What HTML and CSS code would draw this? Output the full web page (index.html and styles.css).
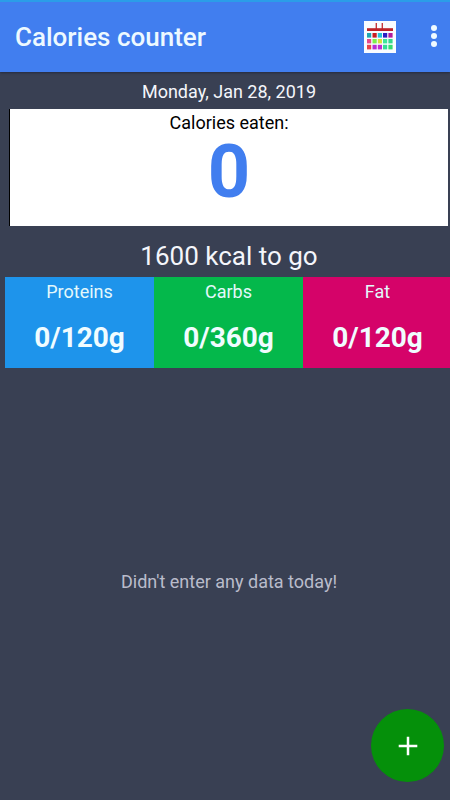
FILE: index.html
```html
<!DOCTYPE html>
<html lang="en">
<head>
<meta charset="utf-8">
<meta name="viewport" content="width=device-width, initial-scale=1">
<title>Calories counter</title>
<link rel="stylesheet" href="styles.css">
</head>
<body>
<header class="app-bar">
  <h1 class="title">Calories counter</h1>
  <button class="bar-button" type="button" aria-label="Calendar">
    <svg width="32" height="32" viewBox="0 0 32 32" aria-hidden="true">
      <rect width="32" height="32" fill="#f9fcff"/>
      <path d="M12.300 2v6M18.300 2v6" stroke="#c4393f" stroke-width="1.4"/>
      <rect x="3" y="7.200" width="26" height="2.800" fill="#bd2229"/>
      <g>
        <rect x="3" y="12" width="4.200" height="4.600" fill="#20a6b2"/>
        <rect x="8.500" y="12" width="4.200" height="4.600" fill="#c91c22"/>
        <rect x="13.800" y="12" width="4.200" height="4.600" fill="#25c4d8"/>
        <rect x="19" y="12" width="4.200" height="4.600" fill="#2b20c4"/>
        <rect x="24.400" y="12" width="4.200" height="4.600" fill="#b21b9c"/>
        <rect x="3" y="18" width="4.200" height="4.400" fill="#e8478c"/>
        <rect x="8.500" y="18" width="4.200" height="4.400" fill="#7bf04a"/>
        <rect x="13.800" y="18" width="4.200" height="4.400" fill="#d8df3c"/>
        <rect x="19" y="18" width="4.200" height="4.400" fill="#3ee69c"/>
        <rect x="24.400" y="18" width="4.200" height="4.400" fill="#32d88c"/>
        <rect x="3" y="23.800" width="4.200" height="4.600" fill="#e8434b"/>
        <rect x="8.500" y="23.800" width="4.200" height="4.600" fill="#b82bd6"/>
        <rect x="13.800" y="23.800" width="4.200" height="4.600" fill="#c32bd0"/>
        <rect x="19" y="23.800" width="4.200" height="4.600" fill="#35dc9a"/>
        <rect x="24.400" y="23.800" width="4.200" height="4.600" fill="#36dc70"/>
      </g>
    </svg>
  </button>
  <button class="bar-button menu-button" type="button" aria-label="More options">
    <svg width="8" height="24" viewBox="0 0 8 24" fill="#f0fbff" aria-hidden="true">
      <circle cx="4" cy="3" r="3"/>
      <circle cx="4" cy="11" r="3"/>
      <circle cx="4" cy="19" r="3"/>
    </svg>
  </button>
</header>
<main class="content">
  <p class="date">Monday, Jan 28, 2019</p>
  <section class="eaten">
    <h2 class="eaten-label">Calories eaten:</h2>
    <p class="eaten-value">0</p>
  </section>
  <p class="remaining">1600 kcal to go</p>
  <section class="macros">
    <div class="macro proteins">
      <h3 class="macro-name">Proteins</h3>
      <p class="macro-value">0/120g</p>
    </div>
    <div class="macro carbs">
      <h3 class="macro-name">Carbs</h3>
      <p class="macro-value">0/360g</p>
    </div>
    <div class="macro fat">
      <h3 class="macro-name">Fat</h3>
      <p class="macro-value">0/120g</p>
    </div>
  </section>
  <p class="empty">Didn't enter any data today!</p>
</main>
<button class="add-button" type="button" aria-label="Add entry">
  <svg width="20" height="20" viewBox="0 0 20 20" aria-hidden="true">
    <path d="M10 .7v18.600M.7 10h18.600" stroke="#fff" stroke-width="2.500"/>
  </svg>
</button>
</body>
</html>
```
FILE: styles.css
```css
* {
  box-sizing: border-box;
}

body {
  margin: 0;
  min-height: 100vh;
  display: flex;
  flex-direction: column;
  overflow-x: hidden;
  background: #394053;
  color: #f4f6fb;
  font-family: Roboto, sans-serif;
  font-size: 18px;
  line-height: 24px;
}

h1, h2, h3, p {
  margin: 0;
  font-size: inherit;
  font-weight: 400;
}

button {
  padding: 0;
  border: 0;
  background: none;
  cursor: pointer;
}

svg {
  display: block;
}

.app-bar {
  display: flex;
  align-items: center;
  height: 72px;
  padding: 0 12px 0 15px;
  border-top: 2px solid #2b9de8;
  background: #417eef;
  box-shadow: 0 1px 2px #252b40;
}

.title {
  flex: 1;
  color: #edf9ff;
  font-size: 26px;
  font-weight: 500;
  line-height: 32px;
}

.menu-button {
  margin-left: 34px;
}

.content {
  flex: 1;
  display: flex;
  flex-direction: column;
  padding-top: 8px;
  text-align: center;
}

.date {
  padding-left: 8px;
}

.eaten {
  height: 117px;
  margin: 5px 2px 0 9px;
  padding-top: 2px;
  border-left: 1px solid #000;
  background: #fff;
  color: #000;
}

.eaten-value {
  color: #417eef;
  font-size: 74px;
  font-weight: 700;
  line-height: 74px;
}

.remaining {
  padding: 14px 0 5px 8px;
  font-size: 26px;
  line-height: 32px;
}

.macros {
  display: grid;
  grid-template-columns: repeat(3, 1fr);
  margin: 0 -2px 0 5px;
}

.macro {
  height: 91px;
  padding-top: 3px;
}

.proteins {
  background: #1e94eb;
}

.carbs {
  background: #04b84b;
}

.fat {
  background: #d50369;
}

.macro-name {
  color: #e3f8fb;
}

.macro-value {
  margin-top: 18px;
  color: #f0fcff;
  font-size: 28px;
  font-weight: 700;
  line-height: 32px;
}

.empty {
  flex: 1;
  display: flex;
  align-items: center;
  justify-content: center;
  padding: 0 0 4px 8px;
  color: #b9bccb;
}

.add-button {
  position: fixed;
  right: 6px;
  bottom: 18px;
  display: grid;
  place-items: center;
  width: 73px;
  height: 73px;
  border-radius: 50%;
  background: #05900a;
}
```
